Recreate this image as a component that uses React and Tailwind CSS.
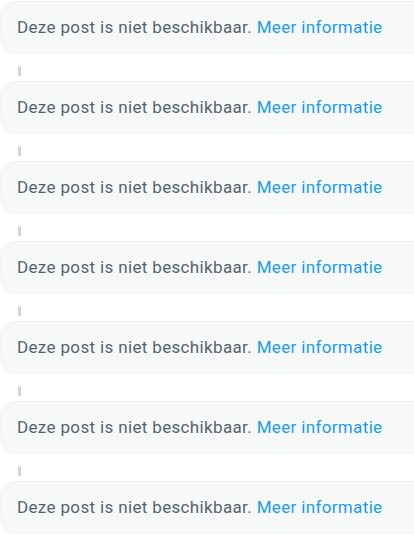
export default function App() {
  const items = Array.from({ length: 7 });
  return (
    <div className="w-[414px] h-[535px] overflow-hidden bg-white" style={{ fontFamily: 'Roboto, "Noto Sans", sans-serif' }}>
      <div className="flex flex-col pt-px">
        {items.map((_, i) => (
          <div key={i} className="flex flex-col">
            <div className="h-[53px] w-[430px] flex items-center pl-4 bg-[#f7f9f9] border border-[#eff3f4] rounded-2xl text-[17px] tracking-[0.35px] text-[#536471]">
              <span>
                Deze post is niet beschikbaar.{" "}
                <span className="text-[#1d9bf0]">Meer informatie</span>
              </span>
            </div>
            {i < items.length - 1 && (
              <div className="h-[27px] pl-[18px] pt-[12px]">
                <div className="w-[3px] h-[10px] bg-[#cfd9de]" />
              </div>
            )}
          </div>
        ))}
      </div>
    </div>
  );
}
